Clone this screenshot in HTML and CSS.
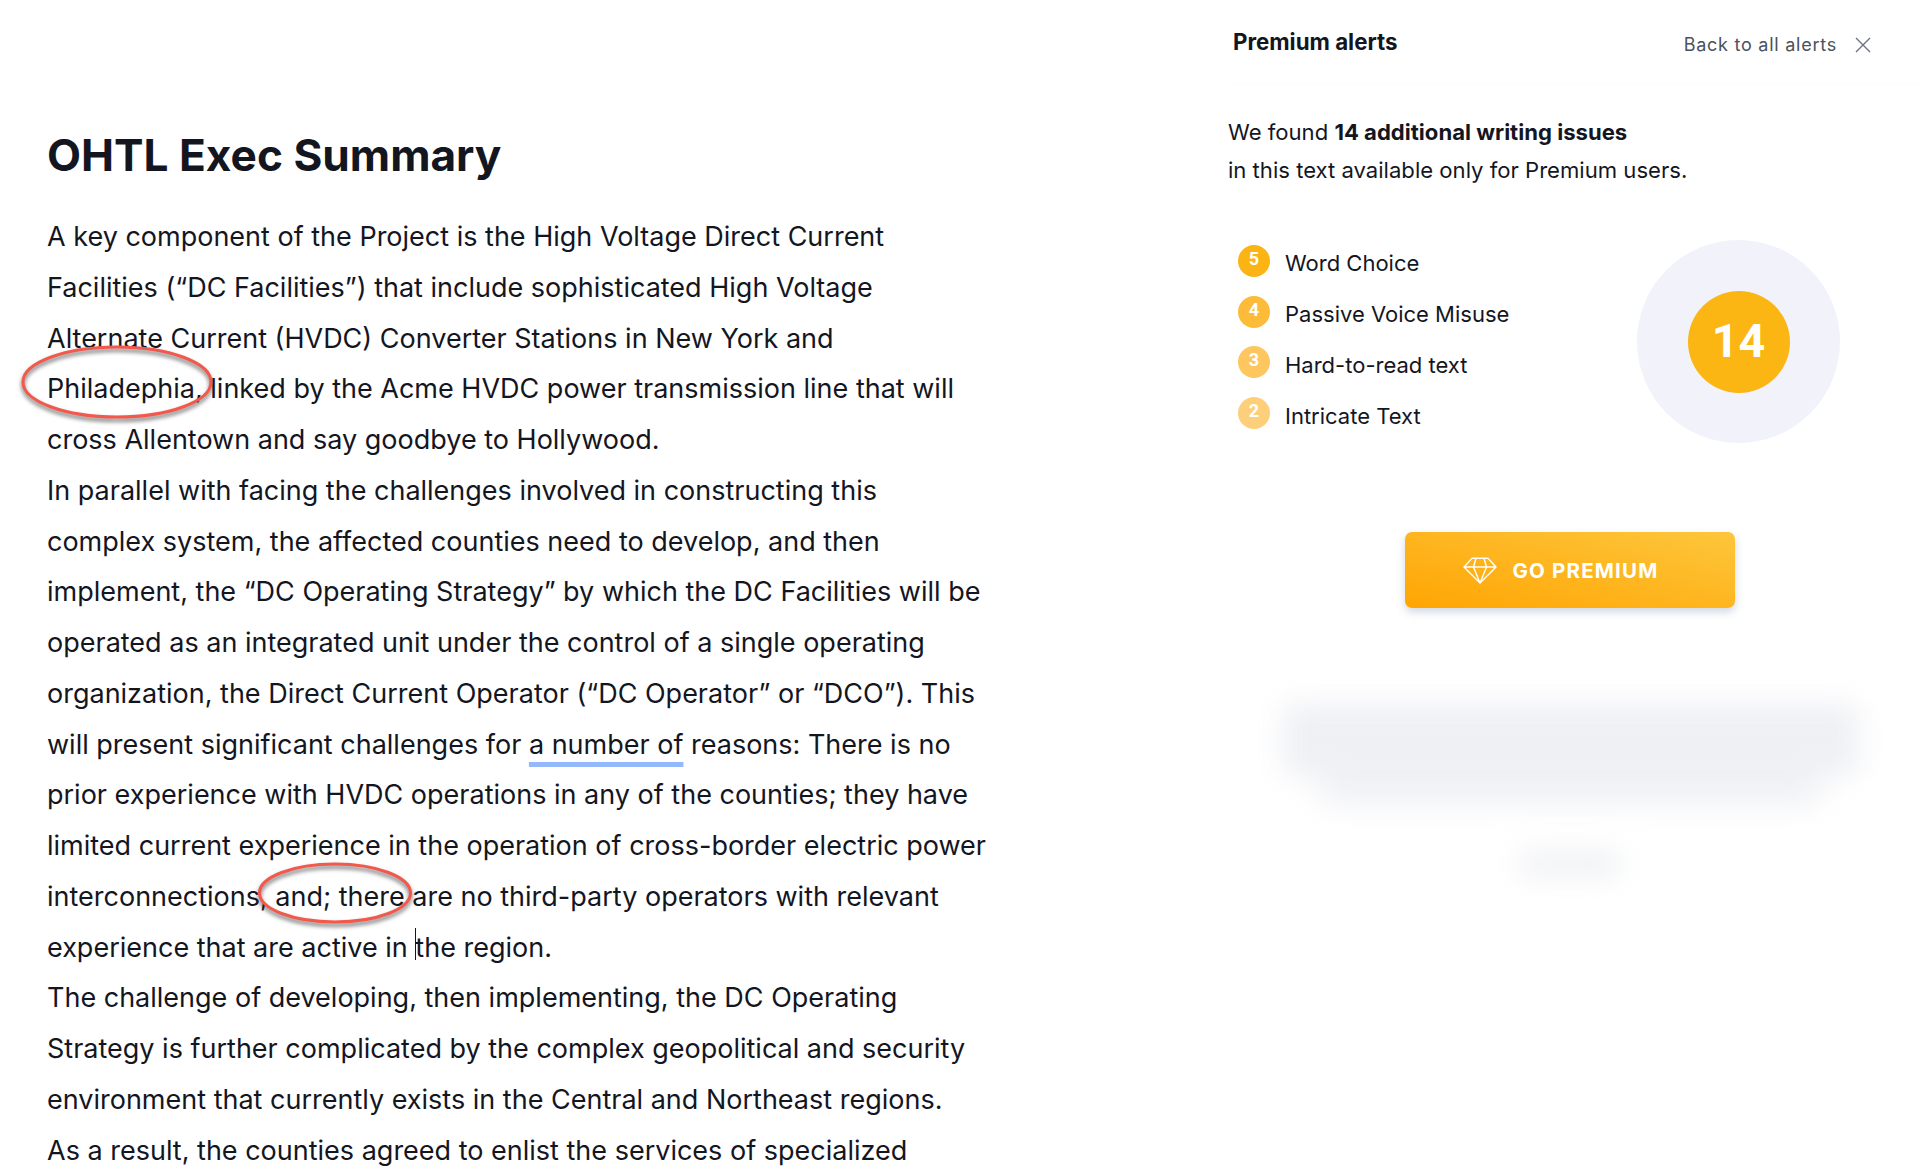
FILE: index.html
```html
<!DOCTYPE html>
<html lang="en">
<head>
<meta charset="utf-8">
<title>OHTL Exec Summary</title>
<link rel="stylesheet" href="styles.css">
</head>
<body>
<div class="page">
  <main class="editor">
    <h1 class="doc-title">OHTL Exec Summary</h1>
    <div class="doc-body">
      <p>A key component of the Project is the High Voltage Direct Current<br>Facilities (“DC Facilities”) that include sophisticated High Voltage<br>Alternate Current (HVDC) Converter Stations in New York and<br><span class="circled">Philadephia,<svg class="ring ring-a" viewBox="0 0 196 78" aria-hidden="true"><ellipse cx="98" cy="38" rx="94" ry="35"/></svg></span> linked by the Acme HVDC power transmission line that will<br>cross Allentown and say goodbye to Hollywood.</p>
      <p>In parallel with facing the challenges involved in constructing this<br>complex system, the affected counties need to develop, and then<br>implement, the “DC Operating Strategy” by which the DC Facilities will be<br>operated as an integrated unit under the control of a single operating<br>organization, the Direct Current Operator (“DC Operator” or “DCO”). This<br>will present significant challenges for <span class="flag">a number of</span> reasons: There is no<br>prior experience with HVDC operations in any of the counties; they have<br>limited current experience in the operation of cross-border electric power<br>interconnections, <span class="circled">and; there<svg class="ring ring-b" viewBox="0 0 160 66" aria-hidden="true"><ellipse cx="78" cy="32" rx="75.500" ry="29"/></svg></span> are no third-party operators with relevant<br>experience that are active in <span class="caret"></span>the region.</p>
      <p>The challenge of developing, then implementing, the DC Operating<br>Strategy is further complicated by the complex geopolitical and security<br>environment that currently exists in the Central and Northeast regions.<br>As a result, the counties agreed to enlist the services of specialized</p>
    </div>
  </main>
  <aside class="panel">
    <header class="panel-head">
      <h2 class="panel-title">Premium alerts</h2>
      <div class="panel-back">
        <span>Back to all alerts</span>
        <svg class="close-icon" viewBox="0 0 16 16" aria-hidden="true"><path d="M1 1l14 14M15 1L1 15"/></svg>
      </div>
    </header>
    <p class="panel-intro">We found <strong>14 additional writing issues</strong><br>in this text available only for Premium users.</p>
    <div class="summary">
      <ul class="alert-list">
        <li class="alert"><span class="count count-5">5</span>Word Choice</li>
        <li class="alert"><span class="count count-4">4</span>Passive Voice Misuse</li>
        <li class="alert"><span class="count count-3">3</span>Hard-to-read text</li>
        <li class="alert"><span class="count count-2">2</span>Intricate Text</li>
      </ul>
      <div class="total-ring"><div class="total">14</div></div>
    </div>
    <button class="go-premium" type="button">
      <svg class="gem" viewBox="0 0 34 27" aria-hidden="true"><path d="M9 1.200h16L33 10 17 26 1 10zM1 10h32M13 1.200L10.500 10 17 26l6.500-16L21 1.200"/></svg>
      GO PREMIUM
    </button>
    <div class="blurred">
      <div class="blur-a"></div>
      <div class="blur-b"></div>
      <div class="blur-c"></div>
    </div>
  </aside>
</div>
</body>
</html>
```

FILE: styles.css
```css
* { box-sizing: border-box; }
html, body { margin: 0; height: 100%; }
body {
  background: #fff;
  color: #14161f;
  font-family: "Inter", "Liberation Sans", sans-serif;
  overflow: hidden;
}
.page {
  display: flex;
  height: 1173px;
  overflow: hidden;
}
.editor {
  width: 1228px;
  flex: none;
  padding: 124px 0 0 47px;
}
.doc-title {
  margin: 0 0 26px;
  font-size: 44.2px;
  line-height: 62px;
  font-weight: 700;
}
.doc-body {
  font-size: 27px;
  line-height: 50.75px;
  white-space: nowrap;
}
.doc-body p { margin: 0; }
.circled { position: relative; }
.ring {
  position: absolute;
  overflow: visible;
  pointer-events: none;
  filter: drop-shadow(0 3px 2px rgba(40, 40, 40, .7));
}
.ring ellipse {
  fill: none;
  stroke: #f2584c;
  stroke-width: 3;
}
.ring-a { left: -28px; top: -28px; width: 196px; height: 78px; }
.ring-b { left: -18px; top: -19px; width: 160px; height: 66px; }
.flag {
  text-decoration: underline;
  text-decoration-color: #94b8fc;
  text-decoration-thickness: 5px;
  text-underline-offset: 8px;
  text-decoration-skip-ink: none;
}
.caret { position: relative; }
.caret::before {
  content: "";
  position: absolute;
  left: 0;
  top: -3px;
  width: 1px;
  height: 32px;
  background: #14161f;
}
.panel {
  flex: 1;
  min-width: 0;
}
.panel-head {
  display: flex;
  justify-content: space-between;
  align-items: flex-start;
  height: 84px;
  padding: 27px 49px 0 5px;
  border-bottom: 1px solid #fcfcfc;
}
.panel-title {
  margin: 0;
  font-size: 22.3px;
  line-height: 30px;
  font-weight: 700;
}
.panel-back {
  display: flex;
  align-items: center;
  gap: 18px;
  margin-top: 3px;
  font-size: 18px;
  line-height: 30px;
  letter-spacing: .75px;
  color: #4c5160;
}
.close-icon { width: 16px; height: 16px; }
.close-icon path { fill: none; stroke: #6d7280; stroke-width: 1.4; }
.panel-intro {
  margin: 29px 0 0;
  font-size: 22.1px;
  line-height: 38px;
}
.panel-intro strong { font-weight: 700; }
.summary {
  display: flex;
  align-items: flex-start;
  margin-top: 51px;
  padding-left: 10px;
}
.alert-list {
  list-style: none;
  margin: -2px 0 0;
  padding: 0;
  width: 399px;
  flex: none;
}
.alert {
  display: flex;
  align-items: center;
  gap: 14px;
  height: 50.75px;
  font-size: 22px;
}
.count {
  display: flex;
  align-items: center;
  justify-content: center;
  width: 32px;
  height: 32px;
  border-radius: 50%;
  color: #fff;
  font: 700 18px/1 "Roboto", sans-serif;
  padding-bottom: 4px;
  margin: -5px 1px 0 0;
}
.count-5 { background: #fcb415; }
.count-4 { background: #fcbc3a; }
.count-3 { background: #fdc65f; }
.count-2 { background: #fecf7a; }
.total-ring {
  width: 203px;
  height: 203px;
  border-radius: 50%;
  background: #f1f2fa;
  display: flex;
  align-items: center;
  justify-content: center;
}
.total {
  width: 102px;
  height: 102px;
  border-radius: 50%;
  background: #fbb614;
  color: #fff;
  display: flex;
  align-items: center;
  justify-content: center;
  font: 700 46.5px/1 "Roboto", sans-serif;
}
.go-premium {
  display: flex;
  align-items: center;
  justify-content: center;
  gap: 15px;
  width: 330px;
  height: 76px;
  margin: 89px 0 0 177px;
  padding: 0 18px 0 0;
  border: 0;
  border-radius: 7px;
  background: linear-gradient(to top right, #ffa503, #fdc63c);
  box-shadow: 0 4px 9px rgba(90, 110, 150, .28);
  color: #fff;
  font-family: "Inter", sans-serif;
  font-size: 20.5px;
  font-weight: 700;
  letter-spacing: 1.2px;
}
.gem { width: 34px; height: 27px; margin-top: 1px; }
.gem path { fill: none; stroke: #fff; stroke-width: 1.4; stroke-linejoin: round; }
.blurred {
  margin-top: 96px;
  display: flex;
  flex-direction: column;
  align-items: center;
  filter: blur(14px);
  width: 684px;
}
.blur-a { width: 575px; height: 72px; background: #eff0f4; }
.blur-b { width: 500px; height: 30px; background: #f1f2f5; }
.blur-c { width: 100px; height: 24px; margin-top: 46px; background: #eff0f4; }
```
